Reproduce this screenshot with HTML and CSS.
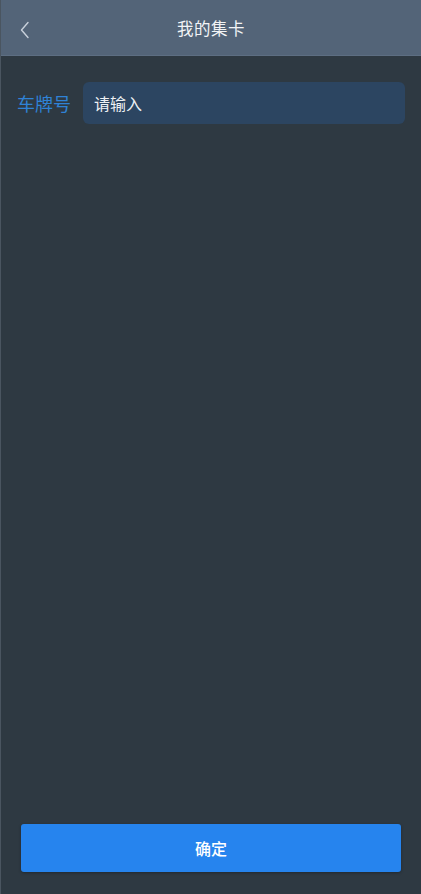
FILE: index.html
```html
<!DOCTYPE html>
<html lang="zh">
<head>
<meta charset="utf-8">
<link rel="stylesheet" href="styles.css">
</head>
<body>
<div class="page">
  <header class="nav">
    <span class="back">
      <svg width="12" height="18" viewBox="0 0 12 18"><path d="M9 1.5 L2.5 9 L9 16.5" fill="none" stroke="#c9d1db" stroke-width="1.4" stroke-linecap="round" stroke-linejoin="round"/></svg>
    </span>
    <h1 class="title">我的集卡</h1>
  </header>
  <main class="content">
    <div class="field">
      <label class="label">车牌号</label>
      <div class="input">请输入</div>
    </div>
  </main>
  <footer class="footer">
    <button class="btn">确定</button>
  </footer>
</div>
</body>
</html>
```
FILE: styles.css
```css
html, body {
  margin: 0;
  padding: 0;
  height: 100%;
}
body {
  background: #2e3942;
  font-family: "Noto Sans CJK SC", "Noto Sans", sans-serif;
}
.page {
  height: 894px;
  display: flex;
  flex-direction: column;
  border-left: 1px solid #4a5560;
  box-sizing: border-box;
}
.nav {
  height: 55px;
  background: #536478;
  border-bottom: 1px solid #5d6e82;
  display: flex;
  align-items: center;
  justify-content: center;
  position: relative;
  flex-shrink: 0;
}
.back {
  position: absolute;
  left: 18px;
  top: 21px;
  display: flex;
}
.title {
  margin: 0;
  font-size: 16.5px;
  font-weight: 400;
  color: #f2f4f6;
  letter-spacing: 0.5px;
}
.content {
  flex: 1;
  padding: 26px 16px 0 16px;
}
.field {
  display: flex;
  align-items: center;
  gap: 12px;
}
.label {
  font-size: 18px;
  color: #2f82d6;
  line-height: 42px;
}
.input {
  flex: 1;
  height: 42px;
  background: #2c4561;
  border-radius: 6px;
  color: #eef1f4;
  font-size: 16px;
  line-height: 42px;
  padding-left: 11px;
}
.footer {
  padding: 0 20px 22px 20px;
}
.btn {
  display: block;
  width: 100%;
  height: 48px;
  border: none;
  border-radius: 3px;
  background: #2684ee;
  color: #ffffff;
  font-family: "Noto Sans CJK SC", "Noto Sans", sans-serif;
  font-size: 16px;
  font-weight: 500;
  box-shadow: 0 1px 3px rgba(0,0,0,0.3);
}
```
